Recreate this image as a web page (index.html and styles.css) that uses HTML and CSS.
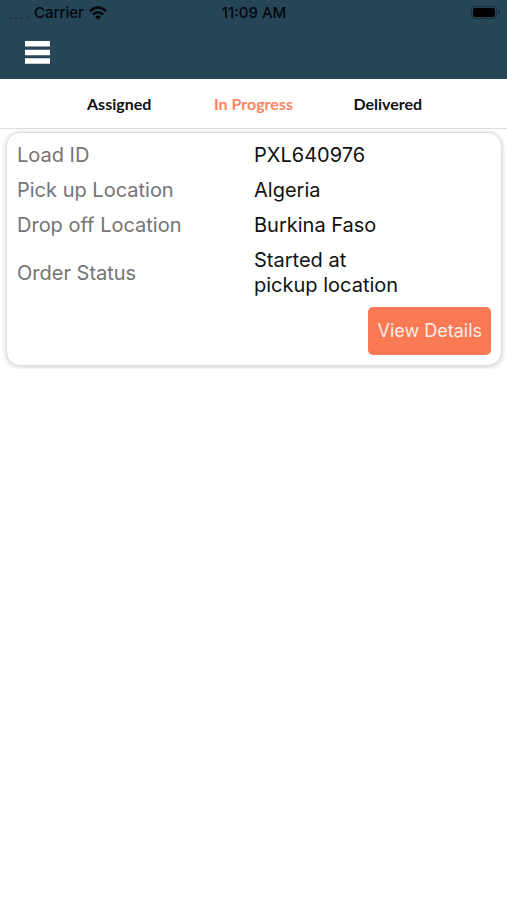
FILE: index.html
```html
<!DOCTYPE html>
<html lang="en">
<head>
<meta charset="utf-8">
<meta name="viewport" content="width=device-width, initial-scale=1">
<title>Loads</title>
<link rel="stylesheet" href="styles.css">
</head>
<body>
<header class="header">
  <div class="status">
    <div class="carrier">
      <svg class="signal" width="24" height="12" viewBox="0 0 24 12" fill="#1c3746" aria-hidden="true"><circle cx="3" cy="10" r="1.3"/><circle cx="9" cy="10" r="1.3"/><circle cx="15" cy="10" r="1.3"/><circle cx="21" cy="10" r="1.3"/></svg>
      <span>Carrier</span>
      <svg width="18" height="14" viewBox="0 0 18 14" fill="none" stroke="#02080c" stroke-width="2.6" aria-hidden="true"><path d="M.9 5.2Q9-2.2 17.1 5.2M4 8.5Q9 4 14 8.5"/><path d="M6.1 10.6Q9 8.2 11.9 10.6L9 13.7Z" fill="#02080c" stroke="none"/></svg>
    </div>
    <time>11:09 AM</time>
    <svg class="battery" width="30" height="14" viewBox="0 0 30 14" aria-hidden="true"><rect x=".5" y=".5" width="25" height="12" rx="3.5" fill="none" stroke="#17313f"/><rect x="2" y="2" width="22" height="9" rx="2" fill="#000"/><path d="M27 4.5Q29 5 29 6.5T27 8.5Z" fill="#17313f"/></svg>
  </div>
  <button class="menu" type="button" aria-label="Menu">
    <svg width="25" height="23" viewBox="0 0 25 23" fill="#fff" aria-hidden="true"><path d="M0 0h25v5.5H0zM0 8.7h25v5.5H0zM0 17.3h25v5.5H0z"/></svg>
  </button>
</header>
<nav class="tabs">
  <a class="tab" href="#assigned">Assigned</a>
  <a class="tab active" href="#progress" aria-current="page">In Progress</a>
  <a class="tab" href="#delivered">Delivered</a>
</nav>
<main>
  <article class="card">
    <dl class="details">
      <dt>Load ID</dt><dd>PXL640976</dd>
      <dt>Pick up Location</dt><dd>Algeria</dd>
      <dt>Drop off Location</dt><dd>Burkina Faso</dd>
      <dt>Order Status</dt><dd>Started at<br>pickup location</dd>
    </dl>
    <button class="view" type="button">View Details</button>
  </article>
</main>
</body>
</html>
```
FILE: styles.css
```css
* { box-sizing: border-box; }
body {
  margin: 0;
  background: #fff;
  color: #111;
  font-family: Inter, "Liberation Sans", sans-serif;
}
button { border: 0; font: inherit; cursor: pointer; }
svg { display: block; }
.header { background: #264557; padding-bottom: 15px; }
.status {
  display: grid;
  grid-template-columns: 1fr auto 1fr;
  align-items: center;
  height: 26px;
  padding: 0 6px 0 7px;
  color: #02080c;
  font-size: 15px;
  font-weight: 500;
  line-height: 26px;
}
.carrier { display: flex; align-items: center; gap: 3px; }
.carrier span { margin-right: 2px; }
.signal { align-self: end; margin-bottom: 6px; }
.battery { justify-self: end; }
.menu {
  display: block;
  margin-left: 20px;
  padding: 15px 5px 0;
  background: none;
}
.tabs {
  display: grid;
  grid-template-columns: repeat(3, 1fr);
  padding: 1px 52px 0;
  border-bottom: 1px solid #dedede;
}
.tab {
  color: #111;
  font-family: Lato, sans-serif;
  font-size: 16px;
  font-weight: 700;
  line-height: 48px;
  text-align: center;
  text-decoration: none;
}
.tab.active { color: #fb8462; }
.card {
  display: flex;
  flex-direction: column;
  margin: 3px 5px 3px 6px;
  padding: 5px 10px 10px;
  border: 1px solid #dedede;
  border-radius: 14px;
  background: #fff;
  box-shadow: 0 1px 4px 1px rgba(0, 0, 0, .14);
}
.details {
  display: grid;
  grid-template-columns: 1fr 1fr;
  align-items: center;
  margin: 0 0 4px;
  font-size: 20px;
  line-height: 25px;
}
.details dt { color: #747474; padding: 5px 0; }
.details dd { margin: 0; padding: 5px 0; }
.view {
  align-self: flex-end;
  padding: 12px 9px;
  border-radius: 5px;
  background: #fa7a54;
  color: #fdeee9;
  font-size: 18px;
  line-height: 24px;
}
```
